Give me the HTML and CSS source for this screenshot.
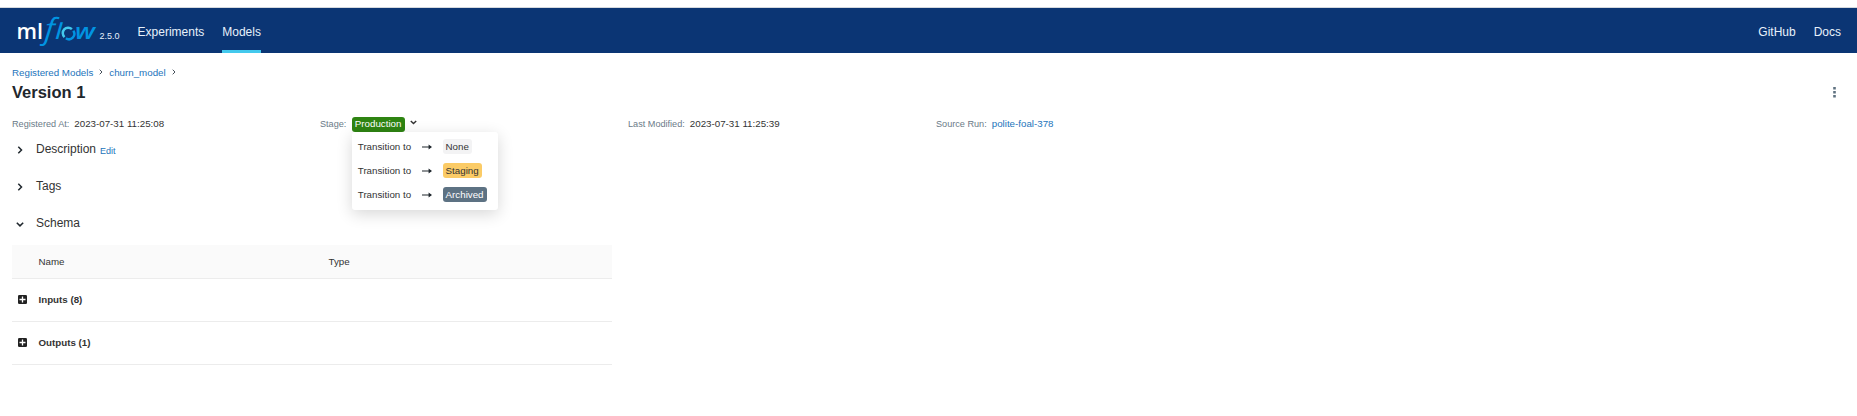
FILE: index.html
```html
<!DOCTYPE html>
<html lang="en">
<head>
<meta charset="utf-8">
<title>MLflow</title>
<link rel="stylesheet" href="styles.css">
</head>
<body>
<header class="topbar">
  <svg class="logo" width="82" height="40" viewBox="0 0 82 40" role="img" aria-label="mlflow">
    <text class="logo-ml" x=".5" y="29" textLength="26.5" lengthAdjust="spacingAndGlyphs">ml</text>
    <text class="logo-f" transform="translate(28 28.5) skewX(-5) scale(1.08 1)">f</text>
    <text class="logo-l" transform="translate(39.3 29) skewX(-4)">l</text>
    <g fill="none" stroke-width="2.5">
      <path stroke="#43c9ed" d="M48.5 27.1a5.3 5.3 0 0 1 7.4-8"/>
      <path stroke="#0194e2" d="M57.3 20.8a5.3 5.3 0 0 1-7.4 7.4"/>
    </g>
    <text class="logo-w" x="59" y="29" textLength="20" lengthAdjust="spacingAndGlyphs">w</text>
  </svg>
  <span class="version">2.5.0</span>
  <nav class="nav"><a>Experiments</a><a class="active">Models</a></nav>
  <nav class="nav nav-right"><a>GitHub</a><a>Docs</a></nav>
</header>
<main class="page">
  <div class="breadcrumb">
    <a class="link">Registered Models</a>
    <svg class="crumb" viewBox="0 0 4 6"><path d="M.7.7 3 3 .7 5.3"/></svg>
    <a class="link">churn_model</a>
    <svg class="crumb" viewBox="0 0 4 6"><path d="M.7.7 3 3 .7 5.3"/></svg>
  </div>
  <div class="title-row">
    <h1>Version 1</h1>
    <svg class="more" width="3" height="11" viewBox="0 0 3 11"><path d="M.2 0h2.6v2.6H.2zM.2 4h2.6v2.6H.2zM.2 8h2.6v2.6H.2z"/></svg>
  </div>
  <div class="meta">
    <div class="meta-item"><span class="label">Registered At:</span>2023-07-31 11:25:08</div>
    <div class="meta-item"><span class="label stage-label">Stage:</span>
      <div class="stage">
        <span class="tag production">Production</span>
        <svg class="chev" width="7" height="5" viewBox="0 0 7 5"><path d="M.8.9 3.5 3.6 6.2.9"/></svg>
        <div class="menu">
          <div class="menu-item">Transition to<svg class="arrow" width="10" height="6" viewBox="0 0 10 6"><path d="M0 2.4h6.6V.4L10 3 6.6 5.6V3.6H0z"/></svg><span class="tag none">None</span></div>
          <div class="menu-item">Transition to<svg class="arrow" width="10" height="6" viewBox="0 0 10 6"><path d="M0 2.4h6.6V.4L10 3 6.6 5.6V3.6H0z"/></svg><span class="tag staging">Staging</span></div>
          <div class="menu-item">Transition to<svg class="arrow" width="10" height="6" viewBox="0 0 10 6"><path d="M0 2.4h6.6V.4L10 3 6.6 5.6V3.6H0z"/></svg><span class="tag archived">Archived</span></div>
        </div>
      </div>
    </div>
    <div class="meta-item"><span class="label">Last Modified:</span>2023-07-31 11:25:39</div>
    <div class="meta-item"><span class="label">Source Run:</span><a class="link">polite-foal-378</a></div>
  </div>
  <section class="section"><svg class="toggle" viewBox="0 0 8 8"><path d="M2.3.8 5.5 4 2.3 7.2"/></svg><h2>Description</h2><a class="link edit">Edit</a></section>
  <section class="section"><svg class="toggle" viewBox="0 0 8 8"><path d="M2.3.8 5.5 4 2.3 7.2"/></svg><h2>Tags</h2></section>
  <section class="section"><svg class="toggle" viewBox="0 0 8 8"><path d="M.8 2.7 4 5.9 7.2 2.7"/></svg><h2>Schema</h2></section>
  <div class="schema">
    <div class="row head"><span></span><span>Name</span><span>Type</span></div>
    <div class="row"><svg class="plus" viewBox="0 0 9 9"><rect width="9" height="9" rx="1.3"/><path d="M4.5 1.5v6M1.5 4.5h6"/></svg><b>Inputs (8)</b><span></span></div>
    <div class="row"><svg class="plus" viewBox="0 0 9 9"><rect width="9" height="9" rx="1.3"/><path d="M4.5 1.5v6M1.5 4.5h6"/></svg><b>Outputs (1)</b><span></span></div>
  </div>
</main>
</body>
</html>
```
FILE: styles.css
```css
* { box-sizing: border-box; }
body {
  margin: 0;
  padding-top: 7px;
  background: #fff;
  color: #333;
  font: 9.75px/15px "Liberation Sans", Arial, sans-serif;
}
h1, h2 { margin: 0; }
.topbar {
  display: flex;
  height: 46px;
  padding: 0 16px;
  border-top: 1px solid #d5d9de;
  background: #0b3574;
}
.logo { margin-top: 2px; flex: none; overflow: visible; }
.logo text { font-family: "Open Sans", sans-serif; }
.logo .logo-ml { fill: #fff; font-size: 22px; font-weight: 600; }
.logo .logo-f { fill: #0194e2; font-size: 29px; font-style: italic; font-weight: 500; }
.logo .logo-l { fill: #0194e2; font-size: 22px; font-style: italic; font-weight: 600; }
.logo .logo-w { fill: #0194e2; font-size: 22px; font-style: italic; font-weight: 600; }
.version { margin: 21px 0 0 1.5px; color: #e7f1fb; font-size: 9px; }
.nav { display: flex; gap: 18px; margin-left: 18px; }
.nav a {
  height: 45px;
  color: #e7f1fb;
  font-size: 12px;
  line-height: 48px;
}
.nav .active { border-bottom: 3px solid #43c9ed; }
.nav-right { margin-left: auto; }
.page { padding: 12px 12px 0; }
.link { color: #2374bb; }
.breadcrumb { display: flex; align-items: center; height: 15px; }
.crumb { width: 4px; height: 6px; margin: -2px 6px 0 6px; fill: none; stroke: #46505a; stroke-width: 1; }
.title-row { display: flex; align-items: center; justify-content: space-between; height: 24px; }
.title-row h1 { color: #1f272d; font-size: 16.5px; line-height: 24px; }
.more { margin-right: 9px; fill: #5f7281; }
.meta { display: flex; height: 15px; margin-top: 12px; }
.meta-item { display: flex; width: 308px; white-space: nowrap; line-height: 16px; }
.label { margin-right: 5px; color: #6b7b88; font-size: 9.15px; }
.stage-label { margin-right: 5.4px; }
.stage { position: relative; display: flex; align-items: center; height: 15px; margin-top: 1px; }
.tag { height: 15px; padding: 0 3px; border-radius: 3px; line-height: 15px; }
.production { padding: 0 3.5px 0 3px; background: #2e8412; color: #fff; line-height: 13px; }
.chev { margin: -4px 0 0 5.5px; fill: none; stroke: #333; stroke-width: 1.4; }
.menu {
  position: absolute;
  z-index: 1;
  top: 15px;
  left: 0;
  width: 146px;
  padding: 3px 0;
  border-radius: 3px;
  background: #fff;
  box-shadow: 0 4px 16px rgba(0, 0, 0, .16);
}
.menu-item { display: flex; align-items: center; height: 24px; padding-left: 6px; }
.menu-item .tag { margin-top: -1px; }
.arrow { margin: -1px 10.5px 0 11px; fill: #1f272d; }
.none { background: #f3f3f4; }
.staging { background: #fbcb66; }
.archived { background: #5d7283; color: #fff; }
.section { display: flex; align-items: center; height: 37px; }
.section h2 { font-size: 12px; font-weight: 400; }
.toggle { width: 8px; height: 8px; margin: 0 12px 0 4px; fill: none; stroke: #1f272d; stroke-width: 1.5; }
.edit { margin: 3px 0 0 4px; font-size: 9px; }
.schema { width: 600px; margin-top: 3px; }
.row {
  display: grid;
  grid-template-columns: 26.5px 290px 1fr;
  align-items: center;
  height: 43px;
  padding-bottom: 1px;
  border-bottom: 1px solid #ececec;
}
.head { height: 34px; padding-bottom: 0; background: #fafafa; }
.plus { width: 9px; height: 9px; margin-left: 6px; fill: #222; stroke: #fff; stroke-width: 1.3; }
.plus rect { stroke: none; }
```
